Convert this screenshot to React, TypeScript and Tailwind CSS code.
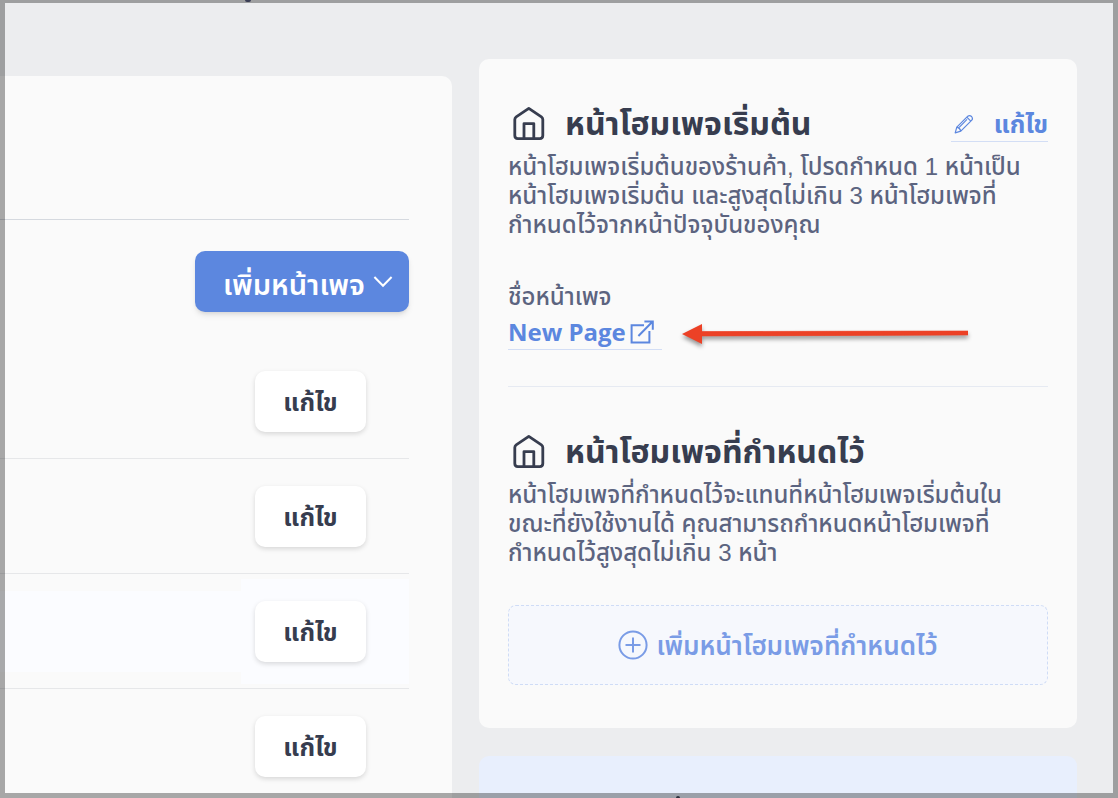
// Home page settings for the storefront builder
import { useState } from 'react';

const pages = [
  { id: 1, name: 'page-1' },
  { id: 2, name: 'page-2' },
  { id: 3, name: 'page-3' },
  { id: 4, name: 'page-4' },
];

function HomeIcon() {
  return (
    <svg viewBox="0 0 32 34" className="w-8 h-[34px] shrink-0" fill="none" stroke="currentColor" strokeWidth="2.8" strokeLinejoin="round" aria-hidden="true">
      <path d="M15.8 2.4 28.4 10.8Q29.8 11.8 29.8 13.4V29.6Q29.8 32.6 26.8 32.6H4.8Q1.8 32.6 1.8 29.6V13.4Q1.8 11.8 3.2 10.8Z" />
      <path d="M11 32.6V17.6H20.8V32.6" />
    </svg>
  );
}

function PencilIcon() {
  return (
    <svg viewBox="0 0 20 20" className="w-5 h-5 shrink-0" fill="none" stroke="currentColor" strokeWidth="1.2" strokeLinejoin="round" aria-hidden="true">
      <path d="M1.2 18.8 2.8 13.2 13.8 2.2Q15.6.8 17.6 2.5 19.2 4.5 17.8 6.2L6.8 17.2Z" />
      <path d="M2.8 13.2Q6 14 6.8 17.2M13 5.4 5.2 13.4M12.8 3.2 16.8 7.2" />
    </svg>
  );
}

function ExternalIcon() {
  return (
    <svg viewBox="0 0 24 24" className="w-6 h-6 shrink-0" fill="none" stroke="currentColor" strokeWidth="2" aria-hidden="true">
      <path d="M14 5.2H1.6V22.4H19.4V11" />
      <path d="M8.4 16 22.4 1.8M14.4 1.4H22.8V9.8" />
    </svg>
  );
}

function Arrow() {
  return (
    <svg viewBox="0 -5 286 30" className="w-[286px] h-[30px] drop-shadow-[0_3px_2px_rgba(0,0,0,0.4)]" fill="#ec4126" aria-hidden="true">
      <path d="M0 12 20 2V9.8L286 9V13L20 13.8V22Z" />
      <path d="M19 9.6 286 9V13L19 14Z" stroke="#ec4126" strokeWidth=".6" />
    </svg>
  );
}

export default function App() {
  const [activeRow, setActiveRow] = useState(3);

  return (
    <div className="h-screen overflow-hidden bg-[#ecedef] text-[#5c6480] font-['Open_Sans','Noto_Sans_Thai','Noto_Sans',sans-serif]">
      <main className="grid grid-cols-[452fr_598fr] items-start gap-[27px] pr-[41px]">
        {/* Page list */}
        <section className="mt-[76px] rounded-tr-[10px] bg-[#fafafa] pr-[43px] pb-8">
          <div className="h-36 border-b border-[#d5d9df]" />
          <div className="flex justify-end pt-[31px] pb-8">
            <button className="flex h-[61px] items-center gap-2 rounded-[10px] bg-[#5c87df] pl-7 pr-4 text-[29px] font-semibold text-white shadow-md">
              <span className="pt-1">เพิ่มหน้าเพจ</span>
              <svg viewBox="0 0 20 12" className="w-5 h-3" fill="none" stroke="currentColor" strokeWidth="2" aria-hidden="true">
                <path d="M1.4 1 10 9.8 18.6 1" />
              </svg>
            </button>
          </div>
          <ul>
            {pages.map(p => (
              <li
                key={p.id}
                onMouseEnter={() => setActiveRow(p.id)}
                className="flex h-[115px] items-center border-b border-[#e6e7e9]"
              >
                <div className={`h-[81px] flex-1 ${activeRow === p.id ? 'bg-[#fbfcff]' : ''}`} />
                <div className={`flex h-[105px] w-[168px] items-center pl-[14px] ${activeRow === p.id ? 'bg-[#fbfcff]' : ''}`}>
                  <button className="h-[61px] w-[111px] rounded-[10px] bg-white pt-[2px] text-[25px] font-bold text-[#373d4f] shadow-[0_2px_5px_rgba(0,0,0,0.14)]">
                    แก้ไข
                  </button>
                </div>
              </li>
            ))}
          </ul>
        </section>

        <div className="mt-[59px] min-w-0">
          <aside className="rounded-[10px] bg-[#fafafa] px-[29px] pt-10 pb-[43px]">
            {/* Default home page */}
            <section>
              <div className="flex items-center justify-between">
                <h2 className="flex h-12 items-center gap-5 pl-[5px] text-[32px] font-bold text-[#373d4f]">
                  <HomeIcon />
                  หน้าโฮมเพจเริ่มต้น
                </h2>
                <a href="#edit" className="flex h-[38px] items-center gap-5 border-b border-[#d3def5] pl-[3px] pt-[2px] text-[25px] font-bold text-[#5c87df]">
                  <PencilIcon />
                  แก้ไข
                </a>
              </div>
              <p className="mt-[5px] text-2xl font-medium leading-[29px] font-['Liberation_Sans','Noto_Sans_Thai','Noto_Sans',sans-serif]">
                หน้าโฮมเพจเริ่มต้นของร้านค้า, โปรดกำหนด 1 หน้าเป็น<br />
                หน้าโฮมเพจเริ่มต้น และสูงสุดไม่เกิน 3 หน้าโฮมเพจที่<br />
                กำหนดไว้จากหน้าปัจจุบันของคุณ
              </p>
              <p className="mt-[39px] text-2xl font-medium leading-9">ชื่อหน้าเพจ</p>
              <div className="flex items-center gap-5">
                <a href="#new-page" className="flex h-9 items-center gap-1 border-b border-[#d3def5] pr-2 text-2xl font-bold text-[#5c87df]">
                  New Page
                  <ExternalIcon />
                </a>
                <Arrow />
              </div>
            </section>

            {/* Scheduled home pages */}
            <section className="mt-9 border-t border-[#e6eaf2] pt-10">
              <h2 className="flex h-12 items-center gap-5 pl-[5px] text-[32px] font-bold text-[#373d4f]">
                <HomeIcon />
                หน้าโฮมเพจที่กำหนดไว้
              </h2>
              <p className="mt-[5px] text-2xl font-medium leading-[29px] font-['Liberation_Sans','Noto_Sans_Thai','Noto_Sans',sans-serif]">
                หน้าโฮมเพจที่กำหนดไว้จะแทนที่หน้าโฮมเพจเริ่มต้นใน<br />
                ขณะที่ยังใช้งานได้ คุณสามารถกำหนดหน้าโฮมเพจที่<br />
                กำหนดไว้สูงสุดไม่เกิน 3 หน้า
              </p>
              <button className="mt-[38px] flex h-20 w-full items-center justify-center gap-2 rounded-lg border border-dashed border-[#cfdcf6] bg-[#f6f8fd] text-[26px] font-semibold text-[#7a9ce6]">
                <svg viewBox="0 0 30 30" className="w-[30px] h-[30px]" fill="none" stroke="currentColor" strokeWidth="2" aria-hidden="true">
                  <circle cx="15" cy="15" r="13.6" />
                  <path d="M7.5 15H22.5M15 7.5V22.5" />
                </svg>
                เพิ่มหน้าโฮมเพจที่กำหนดไว้
              </button>
            </section>
          </aside>
          <aside className="mt-7 h-20 rounded-[10px] bg-[#e8effd]" />
        </div>
      </main>

      {/* Dimmed frame round the view, with the marks cut off at its edges */}
      <div className="pointer-events-none fixed inset-0 border-[5px] border-t-[3px] border-black/33" />
      <div className="pointer-events-none fixed top-0 left-[245px] h-[2px] w-[6px] rounded-b-sm bg-[#3a3e55]" />
      <div className="pointer-events-none fixed bottom-0 left-[676px] h-[2px] w-1 rounded-t-sm bg-[#2b2f3c]" />
    </div>
  );
}
